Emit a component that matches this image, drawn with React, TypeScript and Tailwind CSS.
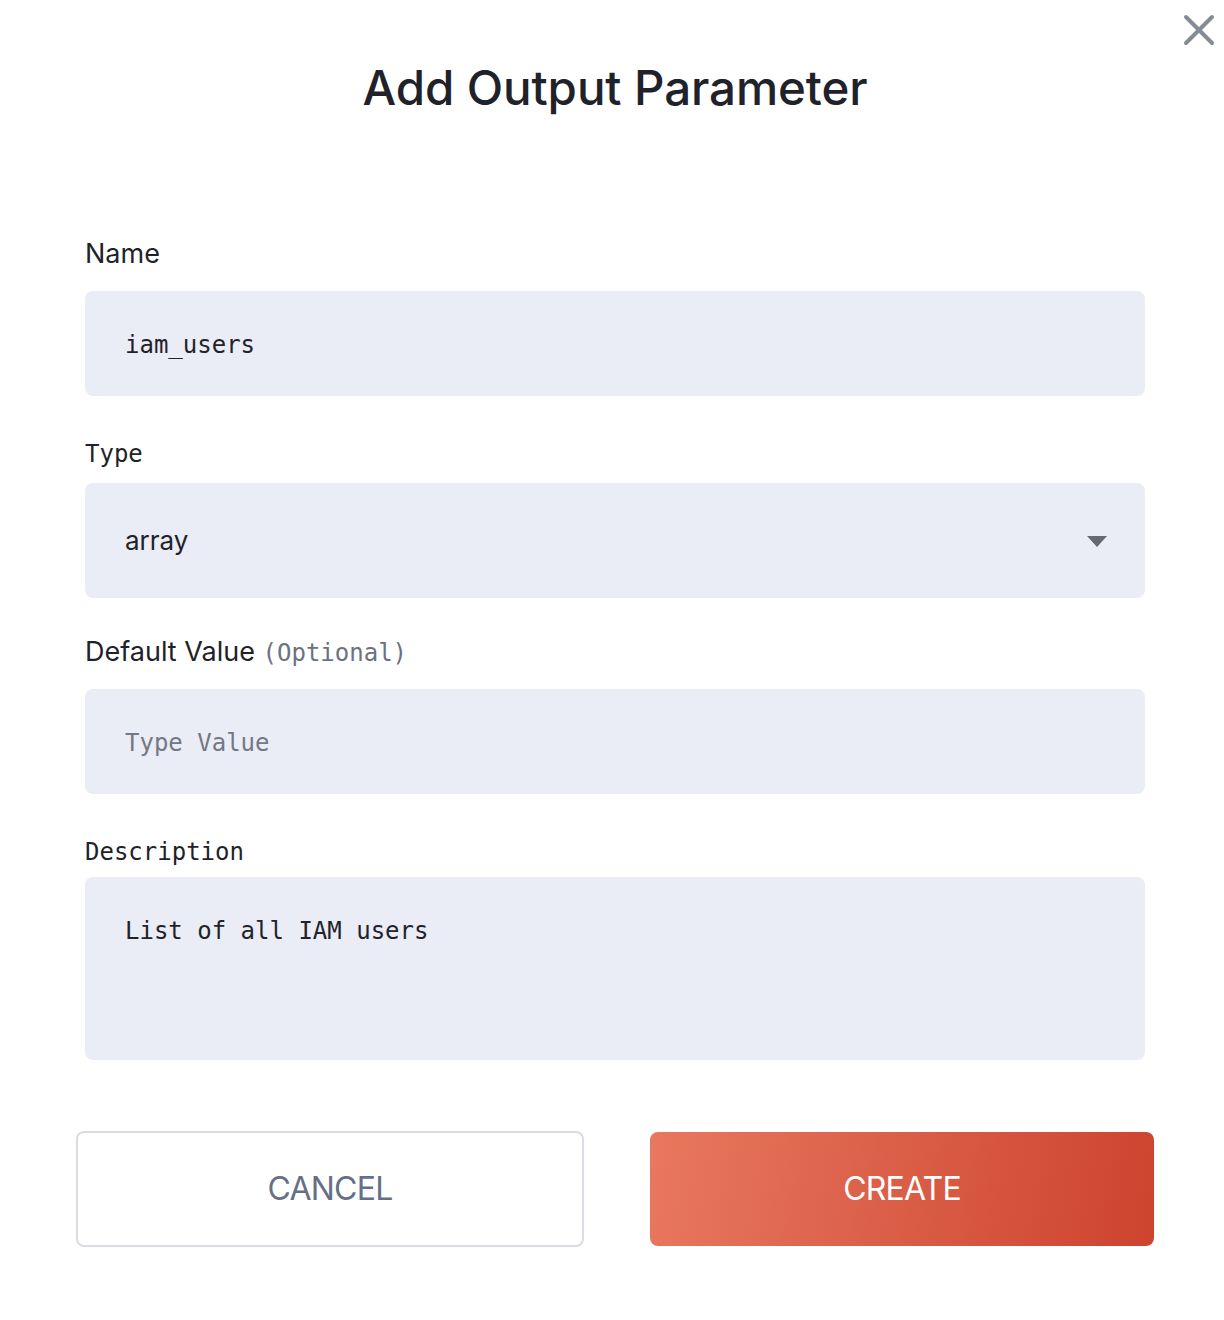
import React, { useState } from 'react';

const mono = "font-['DejaVu_Sans_Mono','Liberation_Mono',monospace]";
const sans = "font-['Inter','Noto_Sans',sans-serif]";

export default function App() {
  const [name, setName] = useState('iam_users');
  const [type, setType] = useState('array');
  const [value, setValue] = useState('');
  const [desc, setDesc] = useState('List of all IAM users');

  return (
    <div className={`relative w-full h-[1320px] bg-white text-[#1f2329] ${sans}`}>
      {/* close */}
      <button className="absolute top-[13px] right-[8px] w-[34px] h-[34px] flex items-center justify-center text-[#858b97]">
        <svg width="32" height="32" viewBox="0 0 32 32" fill="none" stroke="currentColor" strokeWidth="4" strokeLinecap="round">
          <path d="M3 3 L29 29 M29 3 L3 29" />
        </svg>
      </button>

      <h1 className="pt-[60px] pl-[6px] text-center text-[47.5px] leading-[56px] font-medium tracking-[-0.1px]">
        Add Output Parameter
      </h1>

      <div className="ml-[85px] w-[1060px]">
        <label className="block mt-[122px] text-[27px] leading-[32px]">Name</label>
        <input
          value={name}
          onChange={(e) => setName(e.target.value)}
          className={`mt-[21px] w-full h-[105px] rounded-lg bg-[#eaecf6] px-[40px] pt-[3px] text-[24px] outline-none ${mono}`}
        />

        <label className={`block mt-[42px] text-[24px] leading-[32px] ${mono}`}>Type</label>
        <div className="relative mt-[13px] h-[115px] rounded-lg bg-[#eaecf6]">
          <select
            value={type}
            onChange={(e) => setType(e.target.value)}
            className="w-full h-full appearance-none bg-transparent px-[40px] text-[26px] outline-none"
          >
            <option value="string">string</option>
            <option value="number">number</option>
            <option value="boolean">boolean</option>
            <option value="array">array</option>
            <option value="object">object</option>
          </select>
          <svg className="pointer-events-none absolute right-[38px] top-[53px]" width="20" height="11" viewBox="0 0 20 11">
            <path d="M0 0 H20 L10 11 Z" fill="#66696f" />
          </svg>
        </div>

        <label className="block mt-[38px] text-[27px] leading-[32px]">
          Default Value <span className={`text-[24px] text-[#6b7280] ${mono}`}>(Optional)</span>
        </label>
        <input
          value={value}
          onChange={(e) => setValue(e.target.value)}
          placeholder="Type Value"
          className={`mt-[20px] w-full h-[105px] rounded-lg bg-[#eaecf6] px-[40px] pt-[2px] text-[24px] outline-none placeholder:text-[#727884] ${mono}`}
        />

        <label className={`block mt-[42px] text-[24px] leading-[32px] ${mono}`}>Description</label>
        <textarea
          value={desc}
          onChange={(e) => setDesc(e.target.value)}
          className={`block mt-[9px] w-full h-[183px] resize-none rounded-lg bg-[#eaecf6] px-[40px] pt-[38px] text-[24px] leading-[32px] outline-none ${mono}`}
        />
      </div>

      <div className="ml-[76px] w-[1078px] mt-[71px] flex gap-[66px]">
        <button className="flex-1 h-[116px] rounded-lg border-2 border-[#d9dce4] bg-white text-[32px] tracking-[-0.8px] text-[#667085]">
          CANCEL
        </button>
        <button className="flex-1 h-[114px] mt-px rounded-lg bg-[linear-gradient(100deg,#e8785f,#cd432e)] text-[32px] tracking-[-0.8px] text-white">
          CREATE
        </button>
      </div>
    </div>
  );
}
